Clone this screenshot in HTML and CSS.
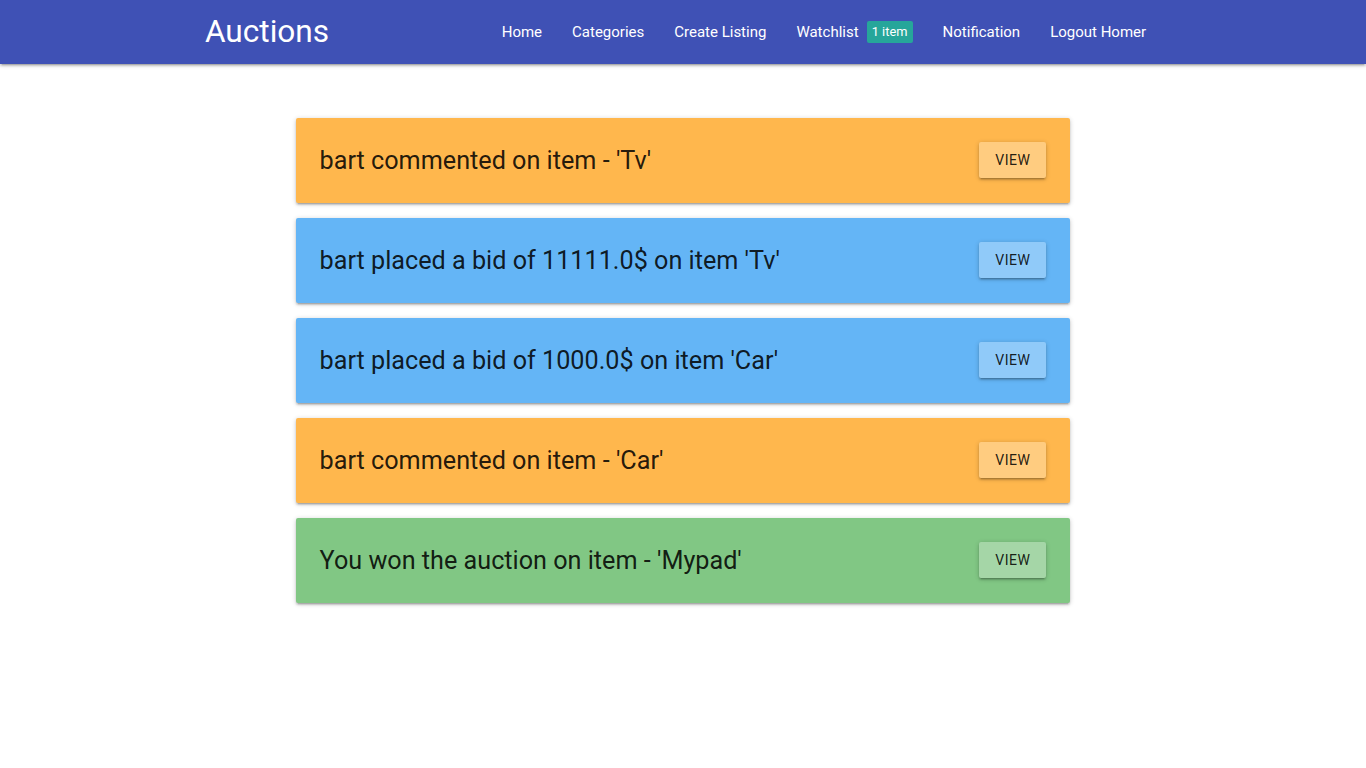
FILE: index.html
```html
<!DOCTYPE html>
<html lang="en">
<head>
<meta charset="utf-8">
<title>Auctions</title>
<link rel="stylesheet" href="styles.css">
</head>
<body>
<nav class="navbar">
  <div class="nav-wrapper container">
    <a class="brand-logo" href="#">Auctions</a>
    <ul class="nav-links">
      <li><a href="#">Home</a></li>
      <li><a href="#">Categories</a></li>
      <li><a href="#">Create Listing</a></li>
      <li><a href="#">Watchlist<span class="badge">1 item</span></a></li>
      <li><a href="#">Notification</a></li>
      <li><a href="#">Logout Homer</a></li>
    </ul>
  </div>
</nav>
<main class="container">
  <div class="col">
    <div class="card-panel orange">
      <span class="msg">bart commented on item - 'Tv'</span>
      <a class="btn btn-orange" href="#">View</a>
    </div>
    <div class="card-panel blue">
      <span class="msg">bart placed a bid of 11111.0$ on item 'Tv'</span>
      <a class="btn btn-blue" href="#">View</a>
    </div>
    <div class="card-panel blue">
      <span class="msg">bart placed a bid of 1000.0$ on item 'Car'</span>
      <a class="btn btn-blue" href="#">View</a>
    </div>
    <div class="card-panel orange">
      <span class="msg">bart commented on item - 'Car'</span>
      <a class="btn btn-orange" href="#">View</a>
    </div>
    <div class="card-panel green">
      <span class="msg">You won the auction on item - 'Mypad'</span>
      <a class="btn btn-green" href="#">View</a>
    </div>
  </div>
</main>
</body>
</html>
```
FILE: styles.css
```css
* { box-sizing: border-box; }
html, body { margin: 0; padding: 0; }
body {
  font-family: Roboto, "Liberation Sans", sans-serif;
  color: rgba(0,0,0,0.87);
  background: #fff;
}
a { text-decoration: none; }
.container {
  width: 70%;
  margin: 0 auto;
}
.navbar {
  background: #3f51b5;
  height: 64px;
  box-shadow: 0 2px 2px 0 rgba(0,0,0,0.14), 0 3px 1px -2px rgba(0,0,0,0.12), 0 1px 5px 0 rgba(0,0,0,0.2);
}
.nav-wrapper {
  display: flex;
  align-items: center;
  justify-content: space-between;
  height: 64px;
}
.brand-logo {
  color: #fff;
  font-size: 31.6px;
  line-height: 64px;
}
.nav-links {
  list-style: none;
  margin: 0;
  padding: 0;
  display: flex;
  height: 64px;
}
.nav-links a {
  display: flex;
  align-items: center;
  height: 64px;
  padding: 0 15px;
  color: #fff;
  font-size: 15px;
}
.nav-links li:first-child a { padding-left: 16px; }
.badge {
  display: inline-block;
  margin-left: 8px;
  height: 22px;
  line-height: 22px;
  width: 46px;
  text-align: center;
  border-radius: 2px;
  background: #26a69a;
  color: #fff;
  font-size: 12.8px;
  font-weight: 400;
}
main.container { padding-top: 54px; }
.col {
  width: 83.3333%;
  margin-left: 8.3333%;
  padding: 0 11px;
}
.card-panel {
  display: flex;
  align-items: center;
  justify-content: space-between;
  padding: 24px 24px 25px;
  height: 85px;
  margin: 0 0 15px 0;
  border-radius: 2px;
  box-shadow: 0 2px 2px 0 rgba(0,0,0,0.14), 0 3px 1px -2px rgba(0,0,0,0.12), 0 1px 5px 0 rgba(0,0,0,0.2);
}
.msg {
  font-size: 25.2px;
  color: rgba(0,0,0,0.87);
}
.orange { background: #ffb74d; }
.blue { background: #64b5f6; }
.green { background: #81c784; }
.btn {
  display: inline-block;
  height: 36px;
  line-height: 36px;
  padding: 0 16px;
  font-size: 14px;
  letter-spacing: .5px;
  text-transform: uppercase;
  color: rgba(0,0,0,0.87);
  border-radius: 2px;
  box-shadow: 0 2px 2px 0 rgba(0,0,0,0.14), 0 3px 1px -2px rgba(0,0,0,0.12), 0 1px 5px 0 rgba(0,0,0,0.2);
}
.btn-orange { background: #ffcc80; }
.btn-blue { background: #90caf9; }
.btn-green { background: #a5d6a7; }
```
